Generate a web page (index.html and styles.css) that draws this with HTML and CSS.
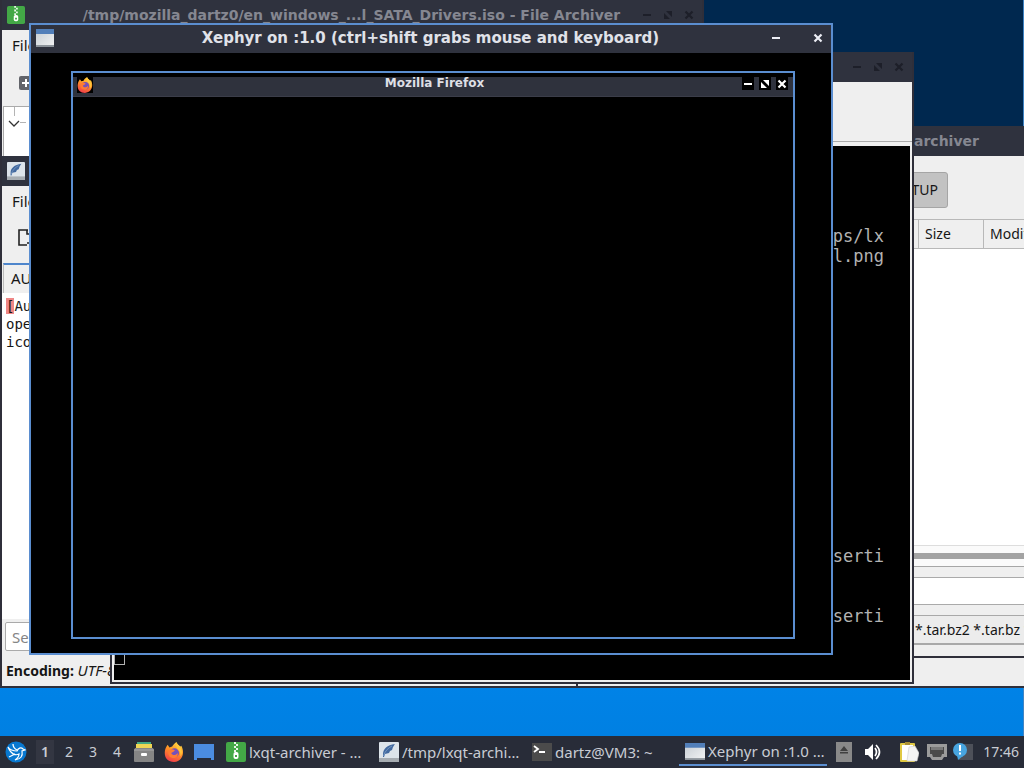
FILE: index.html
```html
<!DOCTYPE html>
<html lang="en">
<head>
<meta charset="utf-8">
<title>Desktop</title>
<link rel="stylesheet" href="styles.css">
</head>
<body>
<svg class="defs" aria-hidden="true">
  <defs>
    <linearGradient id="fox" x1="0.7" y1="0" x2="0.3" y2="1"><stop offset="0" stop-color="#ffd843"/><stop offset="0.45" stop-color="#ff9125"/><stop offset="1" stop-color="#f03a4c"/></linearGradient>
    <linearGradient id="win" x1="0" y1="0" x2="1" y2="1"><stop offset="0" stop-color="#c5ccd2"/><stop offset="1" stop-color="#f1f2f3"/></linearGradient>
    <symbol id="i-zip" viewBox="0 0 20 20"><rect width="20" height="20" rx="2" fill="#43a846"/><path d="M8 0h2v2H8zM10 2h2v2h-2zM8 4h2v2H8zM10 6h2v2h-2zM8 8h2v2H8z" fill="#e8f5e8"/><rect x="7.500" y="10" width="5" height="7" rx="2" fill="#fff"/><path d="M9 13h2v2H9z" fill="#43a846"/></symbol>
    <symbol id="i-quill" viewBox="0 0 20 20"><rect width="20" height="20" rx="1" fill="#dde4ea"/><path d="M0 16h20v4H0z" fill="#a7adb2"/><path d="M4 12C4 7 8 3 16 2c-1 1-1 2-2 3l-1 3-2 1-1 2-4 1-1 3H4z" fill="#42699f"/><path d="M4.500 14C6 9 9 6 13 4" stroke="#7f9fc6" stroke-width="0.800" fill="none"/></symbol>
    <symbol id="i-window" viewBox="0 0 20 18" preserveAspectRatio="none"><rect width="20" height="17" fill="url(#win)"/><path d="M0 0h20v5H0z" fill="#527fb9"/><path d="M0 16h20v2H0z" fill="#8d949b"/></symbol>
    <symbol id="i-firefox" viewBox="0 0 22 22"><path d="M4 3l2 3 3-1c1-2 3-4 5-5-.500 2 2 3 4 5l1-1c4 7 2 17-8 18C4 22 0 17 1 10c.500-3 1-4 3-7z" fill="url(#fox)"/><circle cx="11.500" cy="12" r="5" fill="#7451ba"/><path d="M5 9c3-2 5-1 7 0-1 2-3 2-4 3 1 3 5 3 7 0 1 4-3 7-7 5-3-1-4-5-3-8z" fill="#ff7b32"/><path d="M14 0c0 3 4 4 5 8 1 3 1 6-1 8 1-6-3-8-4-10-1-2-1-4 0-6z" fill="#ffc83c"/></symbol>
    <symbol id="i-min" viewBox="0 0 10 10"><path d="M1 4h8v2H1z" fill="currentColor"/></symbol>
    <symbol id="i-max" viewBox="0 0 10 10"><path d="M3 1h6v6zM1 3v6h6z" fill="currentColor"/></symbol>
    <symbol id="i-close" viewBox="0 0 10 10"><path d="M1.500 1.500l7 7M8.500 1.500l-7 7" stroke="currentColor" stroke-width="2.200" fill="none"/></symbol>
  </defs>
</svg>

<main class="desktop">
  <section class="window iso">
    <header class="titlebar">
      <svg class="app-icon"><use href="#i-zip"/></svg>
      <h2 class="title">/tmp/mozilla_dartz0/en_windows_...l_SATA_Drivers.iso - File Archiver</h2>
      <div class="controls">
        <button aria-label="Minimize"><svg><use href="#i-min"/></svg></button>
        <button aria-label="Maximize"><svg><use href="#i-max"/></svg></button>
        <button aria-label="Close"><svg><use href="#i-close"/></svg></button>
      </div>
    </header>
    <nav class="menubar"><button>File</button></nav>
    <div class="iso-tools"><button aria-label="Add"><svg viewBox="0 0 14 14"><rect width="14" height="14" rx="2" fill="#62646a"/><path d="M6 3h2v3h3v2H8v3H6V8H3V6h3z" fill="#fff"/></svg></button></div>
    <div class="iso-tree"><svg viewBox="0 0 22 34"><path d="M10.500 0v9M16 15.500h6" stroke="#b4b4b4" fill="none"/><path d="M5 14l5 5 5-5" stroke="#333" stroke-width="1.300" fill="none"/></svg></div>
  </section>

  <section class="window backdrop"></section>

  <section class="window dialog">
    <header class="titlebar"><h2 class="title">archiver</h2></header>
    <div class="places"><button>SETUP</button></div>
    <table class="files">
      <thead><tr><th class="col-name"></th><th class="col-size">Size</th><th>Modified</th></tr></thead>
    </table>
    <div class="file-area"></div>
    <div class="scroll-track"><div class="scroll-thumb"></div></div>
    <div class="spacer"></div>
    <input class="file-name" aria-label="File name">
    <select class="file-type" aria-label="Files of type"><option>*.tar.bz2 *.tar.bz *.tbz2</option></select>
  </section>

  <section class="window editor">
    <header class="titlebar"><svg class="app-icon"><use href="#i-quill"/></svg></header>
    <nav class="menubar"><button>File</button></nav>
    <div class="editor-tools"><button aria-label="New"><svg viewBox="0 0 18 18"><path d="M12 1H3v15h8M11 1v4h6M11 14h6" stroke="#222" stroke-width="1.600" fill="none"/></svg></button></div>
    <div class="tabs"><button>AUTH</button></div>
    <pre class="code"><mark>[</mark>Aut
open
icon</pre>
    <div class="search"><input placeholder="Search" aria-label="Search"></div>
    <footer class="status"><b>Encoding:</b> <i>UTF-8</i></footer>
  </section>

  <section class="window terminal">
    <header class="titlebar">
      <div class="controls">
        <button aria-label="Minimize"><svg><use href="#i-min"/></svg></button>
        <button aria-label="Maximize"><svg><use href="#i-max"/></svg></button>
        <button aria-label="Close"><svg><use href="#i-close"/></svg></button>
      </div>
    </header>
    <div class="term-menu"></div>
    <div class="term-body">
<pre class="output">




ps/lx
l.png














serti


serti

</pre>
      <span class="cursor"></span>
    </div>
  </section>

  <section class="window xephyr">
    <header class="titlebar">
      <svg class="app-icon"><use href="#i-window"/></svg>
      <h1 class="title">Xephyr on :1.0 (ctrl+shift grabs mouse and keyboard)</h1>
      <div class="controls">
        <button aria-label="Minimize"><svg><use href="#i-min"/></svg></button>
        <button aria-label="Close"><svg><use href="#i-close"/></svg></button>
      </div>
    </header>
    <div class="screen">
      <section class="firefox">
        <header class="inner-bar">
          <svg class="inner-icon"><use href="#i-firefox"/></svg>
          <h2 class="inner-title">Mozilla Firefox</h2>
          <div class="inner-controls">
            <button aria-label="Minimize"><svg><use href="#i-min"/></svg></button>
            <button aria-label="Maximize"><svg><use href="#i-max"/></svg></button>
            <button aria-label="Close"><svg><use href="#i-close"/></svg></button>
          </div>
        </header>
      </section>
    </div>
  </section>
</main>

<footer class="panel">
  <button class="start" aria-label="Menu"><svg viewBox="0 0 22 22"><circle cx="11" cy="11" r="10.500" fill="#0878d0"/><path d="M3 6c2 3 5 4 9 4 1-3 4-4 6-2l2 1-3 1c1 5-1 8-7 9 3-2 4-4 4-6-4 2-8 0-11-7z" fill="none" stroke="#fff" stroke-width="1.200"/><path d="M8 3c0 3 2 5 4 6M4 16l6-3" stroke="#fff" fill="none" stroke-width="1.300"/></svg></button>
  <nav class="pager"><button class="current">1</button><button>2</button><button>3</button><button>4</button></nav>
  <div class="launchers">
    <button aria-label="Files"><svg viewBox="0 0 20 20"><path d="M3 0h14v4H3z" fill="#43a884"/><path d="M2 2h16v5H2z" fill="#efd654"/><path d="M1 6h18l1 2v11q0 1-1 1H1q-1 0-1-1V8z" fill="#858585"/><path d="M0 8h20" stroke="#aaa"/><rect x="7" y="11" width="6" height="3" rx="1" fill="#fff"/></svg></button>
    <button aria-label="Firefox"><svg><use href="#i-firefox"/></svg></button>
    <button aria-label="Show desktop"><svg viewBox="0 0 20 20"><path d="M0 2h20v16h-3v-2H3v2H0z" fill="#4b8ce0"/></svg></button>
  </div>
  <div class="tasks">
    <button><svg><use href="#i-zip"/></svg><span>lxqt-archiver - …</span></button>
    <button><svg><use href="#i-quill"/></svg><span>/tmp/lxqt-archi…</span></button>
    <button><svg viewBox="0 0 20 20"><rect y="1" width="20" height="18" fill="#4b4b4b"/><path d="M2 4l4 3-4 3" stroke="#fff" stroke-width="1.800" fill="none"/><path d="M7 10h6" stroke="#fff" stroke-width="2"/></svg><span>dartz@VM3: ~</span></button>
    <button class="active"><svg><use href="#i-window"/></svg><span>Xephyr on :1.0 …</span></button>
  </div>
  <div class="tray">
    <button class="eject" aria-label="Eject"><svg viewBox="0 0 16 20"><rect width="16" height="20" fill="#898989"/><path d="M4 9l4-5 4 5zM4 10h8v1.500H4z" fill="#404040"/></svg></button>
    <button class="volume" aria-label="Volume"><svg viewBox="0 0 18 18"><path d="M1 6h3l5-5v16l-5-5H1z" fill="#fff"/><path d="M11 5q3 4 0 8M12 2q7 7 0 14" fill="none" stroke="#fff" stroke-width="1.700"/></svg></button>
    <button class="clip" aria-label="Clipboard"><svg viewBox="0 0 20 20"><rect x="1" y="1" width="15" height="19" rx="1" fill="#e0c843"/><path d="M3 3h11v15H3z" fill="#fff"/><path d="M6 0h5v3H6z" fill="#a98e33"/><path d="M10 5l6-1 4 7-2 8H8z" fill="#f4f4f4" stroke="#ccc" stroke-width="0.600"/></svg></button>
    <button class="network" aria-label="Network"><svg viewBox="0 0 20 20"><path d="M0 2h20v13h-3l-2 3H5l-2-3H0z" fill="#9b9b9b"/><path d="M3 5h14v7h-2l-1 3H6l-1-3H3z" fill="#4a4a4a"/><path d="M5 5v3M7 5v3M9 5v3M11 5v3M13 5v3M15 5v3" stroke="#aaa"/></svg></button>
    <button class="notice" aria-label="Notifications"><svg viewBox="0 0 20 20"><path d="M11 2h9v16H6v-4h5z" fill="#4d5059"/><circle cx="7" cy="8" r="7" fill="#48a5e0"/><path d="M4 13l1 5 5-4z" fill="#48a5e0"/><path d="M7 3v6M7 10.500v2" stroke="#fff" stroke-width="2"/></svg></button>
    <time>17:46</time>
  </div>
</footer>
</body>
</html>
```
FILE: styles.css
```css
* { box-sizing: border-box; }
body {
  margin: 0;
  height: 100vh;
  display: flex;
  flex-direction: column;
  overflow: hidden;
  font: 14px/20px "Noto Sans", "Open Sans", sans-serif;
  color: #161616;
}
button { font: inherit; color: inherit; background: none; border: 0; padding: 0; margin: 0; }
input, select { font: inherit; color: inherit; margin: 0; border-radius: 0; }
svg { display: block; }
.defs { position: absolute; width: 0; height: 0; }

/* Desktop and free-floating windows */
.desktop {
  flex: 1;
  position: relative;
  overflow: hidden;
  background:
    linear-gradient(#4084c4, #4084c4) right / 1px 100% no-repeat,
    linear-gradient(#00284f 0, #00284f 130px, #0083e8 680px, #0080e2);
}
.window {
  position: absolute;
  display: flex;
  flex-direction: column;
  overflow: hidden;
  background: #efefef;
  border: 2px solid #2f2f3a;
  border-top: 0;
}
.titlebar {
  flex: none;
  height: 30px;
  display: flex;
  align-items: center;
  padding: 0 10px 0 5px;
  background: #2f323e;
  color: #858791;
}
.app-icon { width: 18px; height: 18px; flex: none; }
.title {
  flex: 1;
  margin: 0;
  font: bold 14px/20px "DejaVu Sans", sans-serif;
  text-align: center;
  white-space: nowrap;
}
.controls { display: flex; gap: 11px; margin-left: auto; color: #1d1f29; }
.controls svg, .inner-controls svg { width: 10px; height: 10px; }
.menubar { height: 30px; flex: none; display: flex; align-items: center; padding-left: 10px; font-size: 15px; }

.iso { left: 0; top: 0; width: 704px; height: 400px; }
.iso .titlebar { padding-right: 8px; }
.iso .title { padding-left: 36px; }
.iso-tools { height: 46px; padding: 15px 17px; }
.iso-tools svg { width: 14px; height: 14px; }
.iso-tree { flex: 1; margin-left: 1px; background: #fff; border: 1px solid #aaa; }
.iso-tree svg { width: 22px; height: 34px; }

.backdrop { left: 576px; right: -60px; top: 300px; height: 388px; }

.dialog { left: 576px; right: -60px; top: 126px; height: 532px; }
.dialog .title { flex: none; padding-left: 331px; }
.places { height: 63px; flex: none; padding: 16px 0 10px 238px; }
.places button {
  width: 132px;
  height: 36px;
  padding-right: 9px;
  text-align: right;
  background: #c2c2c2;
  border: 1px solid #a5a5a5;
  border-radius: 3px;
}
.files { width: 100%; border-collapse: collapse; table-layout: fixed; flex: none; }
.files th {
  height: 29px;
  padding: 0 6px;
  font-weight: normal;
  text-align: left;
  border: 1px solid #b8b8b8;
}
.col-name { width: 340px; }
.col-size { width: 65px; }
.file-area { flex: 1; background: #fff; border-bottom: 1px solid #ddd; }
.scroll-track { height: 21px; padding: 7px 0; background: #fafafa; border-bottom: 1px solid #a6a6a6; }
.scroll-thumb { height: 6px; background: #a3a3a3; }
.spacer { height: 10px; flex: none; }
.file-name { height: 28px; flex: none; background: #fff; border: 1px solid #aaa; margin-bottom: 10px; }
.file-type {
  appearance: none;
  height: 30px;
  flex: none;
  margin-bottom: 11px;
  padding: 0 0 0 336px;
  background: #ececec;
  border: 1px solid #a9a9a9;
  border-bottom-width: 2px;
}

.editor { left: 0; top: 156px; width: 578px; height: 532px; }
.editor-tools { height: 47px; flex: none; padding: 13px 14px; }
.editor-tools svg { width: 18px; height: 18px; }
.tabs { height: 30px; flex: none; margin-left: 1px; border-top: 2px solid #4e86cc; border-left: 1px solid #bbb; }
.tabs button { height: 26px; padding-left: 7px; font-size: 15px; }
.code {
  flex: 1;
  margin: 0;
  padding: 4px;
  background: #fff;
  font: 14px/18px "DejaVu Sans Mono", monospace;
}
.code mark { background: #ef8787; color: inherit; }
.search { height: 33px; flex: none; padding: 3px 3px 0; }
.search input { width: 100%; height: 29px; padding: 0 6px; border: 1px solid #aaa; border-radius: 2px; background: #fff; font-size: 15px; }
.search input::placeholder { color: #858585; }
.status { height: 34px; flex: none; padding: 8px 4px; }
.status i { font-size: 15px; }

.terminal { left: 110px; top: 52px; width: 804px; height: 632px; }
.terminal .titlebar { padding-right: 8px; }
.term-menu { height: 60px; flex: none; border-bottom: 1px solid #aaa; }
.term-body {
  flex: 1;
  margin: 4px 2px 2px;
  padding-right: 26px;
  background: #000;
  color: #b2b2b2;
}
.output { margin: 0; font: 17px/20px "DejaVu Sans Mono", monospace; text-align: right; }
.cursor { display: block; width: 11px; height: 19px; border: 1px solid #b2b2b2; }

.xephyr { left: 29px; top: 23px; width: 804px; height: 632px; border: 2px solid #5b8ed0; background: #000; }
.xephyr .titlebar { height: 28px; padding: 0 8px 2px 5px; color: #e0e2e9; }
.xephyr .controls { color: #eceef5; gap: 32px; }
.xephyr .title { padding-left: 36px; font-size: 15px; }
.screen { flex: 1; padding: 18px 36px 14px 40px; display: flex; }
.firefox { flex: 1; border: 2px solid #5b8ed0; }
.inner-bar {
  height: 24px;
  display: flex;
  align-items: flex-start;
  padding: 0 5px 0 4px;
  background: #2f323d;
  border-top: 4px solid #000;
  border-bottom: 1px solid #3b3d49;
}
.inner-icon { width: 16px; height: 16px; background: #000; }
.inner-title { flex: 1; margin: 0; padding-left: 34px; font: bold 12px/12px "DejaVu Sans", sans-serif; color: #dedfe5; text-align: center; }
.inner-controls { display: flex; gap: 5px; color: #fff; }
.inner-controls button { padding: 2px 1px 1px; background: #000; }

/* Bottom panel */
.panel {
  height: 32px;
  flex: none;
  display: flex;
  align-items: center;
  padding: 0 5px;
  background: #282c38;
  color: #c9ccd4;
}
.start svg { width: 22px; height: 22px; }
.pager { display: flex; gap: 6px; margin-left: 9px; }
.pager button { width: 18px; height: 24px; }
.pager .current { background: #333642; font-weight: 600; }
.launchers { display: flex; gap: 10px; margin-left: 8px; }
.launchers svg { width: 20px; height: 20px; }
.tasks { flex: 1; display: flex; gap: 5px; margin-left: 6px; font-size: 15px; }
.tasks button {
  flex: 0 1 148px;
  min-width: 0;
  height: 32px;
  display: flex;
  align-items: center;
  gap: 3px;
  padding: 2px 0 0 6px;
  border-bottom: 2px solid transparent;
  white-space: nowrap;
}
.tasks .active { height: 30px; border-color: #5b8ed0; }
.tasks svg { width: 20px; height: 20px; flex: none; }
.tasks .active svg { height: 17px; }
.tray { display: flex; align-items: center; }
.tray svg { width: 20px; height: 20px; }
.tray .eject svg { width: 16px; }
.tray .volume { margin: 0 17px 0 12px; }
.tray .volume svg { width: 18px; height: 18px; }
.tray .network { margin: 0 6px 0 8px; }
.tray time { margin-left: 10px; }
```
